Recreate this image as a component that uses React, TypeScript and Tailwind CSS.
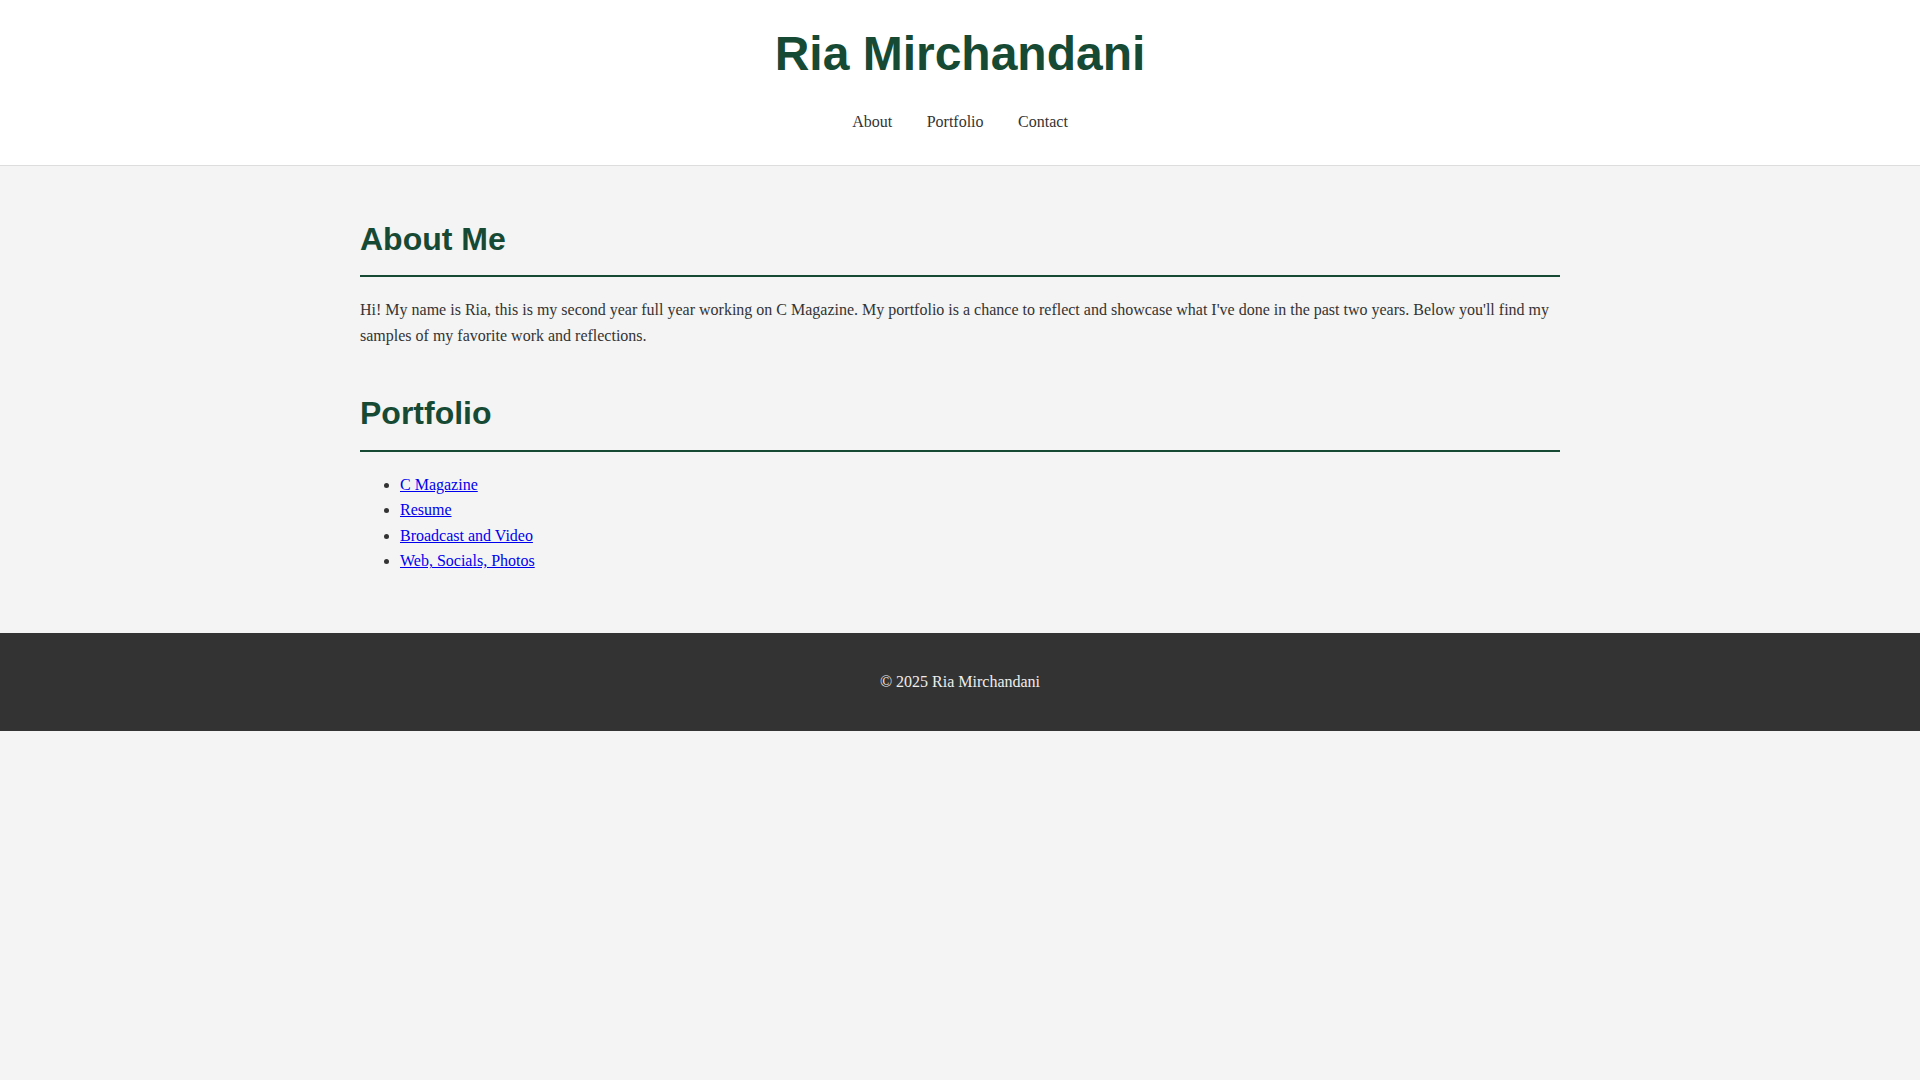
const NAV_LINKS = ["About", "Portfolio", "Contact"];

const PORTFOLIO_LINKS = [
  "C Magazine",
  "Resume",
  "Broadcast and Video",
  "Web, Socials, Photos",
];

function SectionHeading({ children }: { children: React.ReactNode }) {
  return (
    <h2 className="mb-[20px] border-b-2 border-[#174a34] pb-[10px] font-['Liberation_Sans',Arial,sans-serif] text-[32px] font-bold leading-[1.6] text-[#174a34]">
      {children}
    </h2>
  );
}

export default function App() {
  return (
    <div className="min-h-screen bg-[#f4f4f4] font-['Liberation_Serif','Times_New_Roman',serif] text-[16px] leading-[1.6] text-[#333]">
      <header className="h-[166px] border-b border-[#ddd] bg-white pt-4 text-center">
        <h1 className="font-['Liberation_Sans',Arial,sans-serif] text-[48px] font-bold leading-[1.6] text-[#174a34]">
          Ria Mirchandani
        </h1>
        <nav className="mt-4">
          <ul className="flex justify-center gap-[34.5px]">
            {NAV_LINKS.map((link) => (
              <li key={link}>
                <a href="#" className="text-[#333]">
                  {link}
                </a>
              </li>
            ))}
          </ul>
        </nav>
      </header>

      <main className="pt-[48px] pb-[59px]">
        <div className="mx-auto max-w-[1200px]">
          <section className="mb-[40px]">
            <SectionHeading>About Me</SectionHeading>
            <p>
              Hi! My name is Ria, this is my second year full year working on C
              Magazine. My portfolio is a chance to reflect and showcase what
              I've done in the past two years. Below you'll find my samples of
              my favorite work and reflections.
            </p>
          </section>

          <section>
            <SectionHeading>Portfolio</SectionHeading>
            <ul className="list-disc pl-[40px]">
              {PORTFOLIO_LINKS.map((link) => (
                <li key={link}>
                  <a href="#" className="text-[#0000ee] underline">
                    {link}
                  </a>
                </li>
              ))}
            </ul>
          </section>
        </div>
      </main>

      <footer className="bg-[#333] py-[36px] text-center text-[#eee]">
        <p>© 2025 Ria Mirchandani</p>
      </footer>
    </div>
  );
}
